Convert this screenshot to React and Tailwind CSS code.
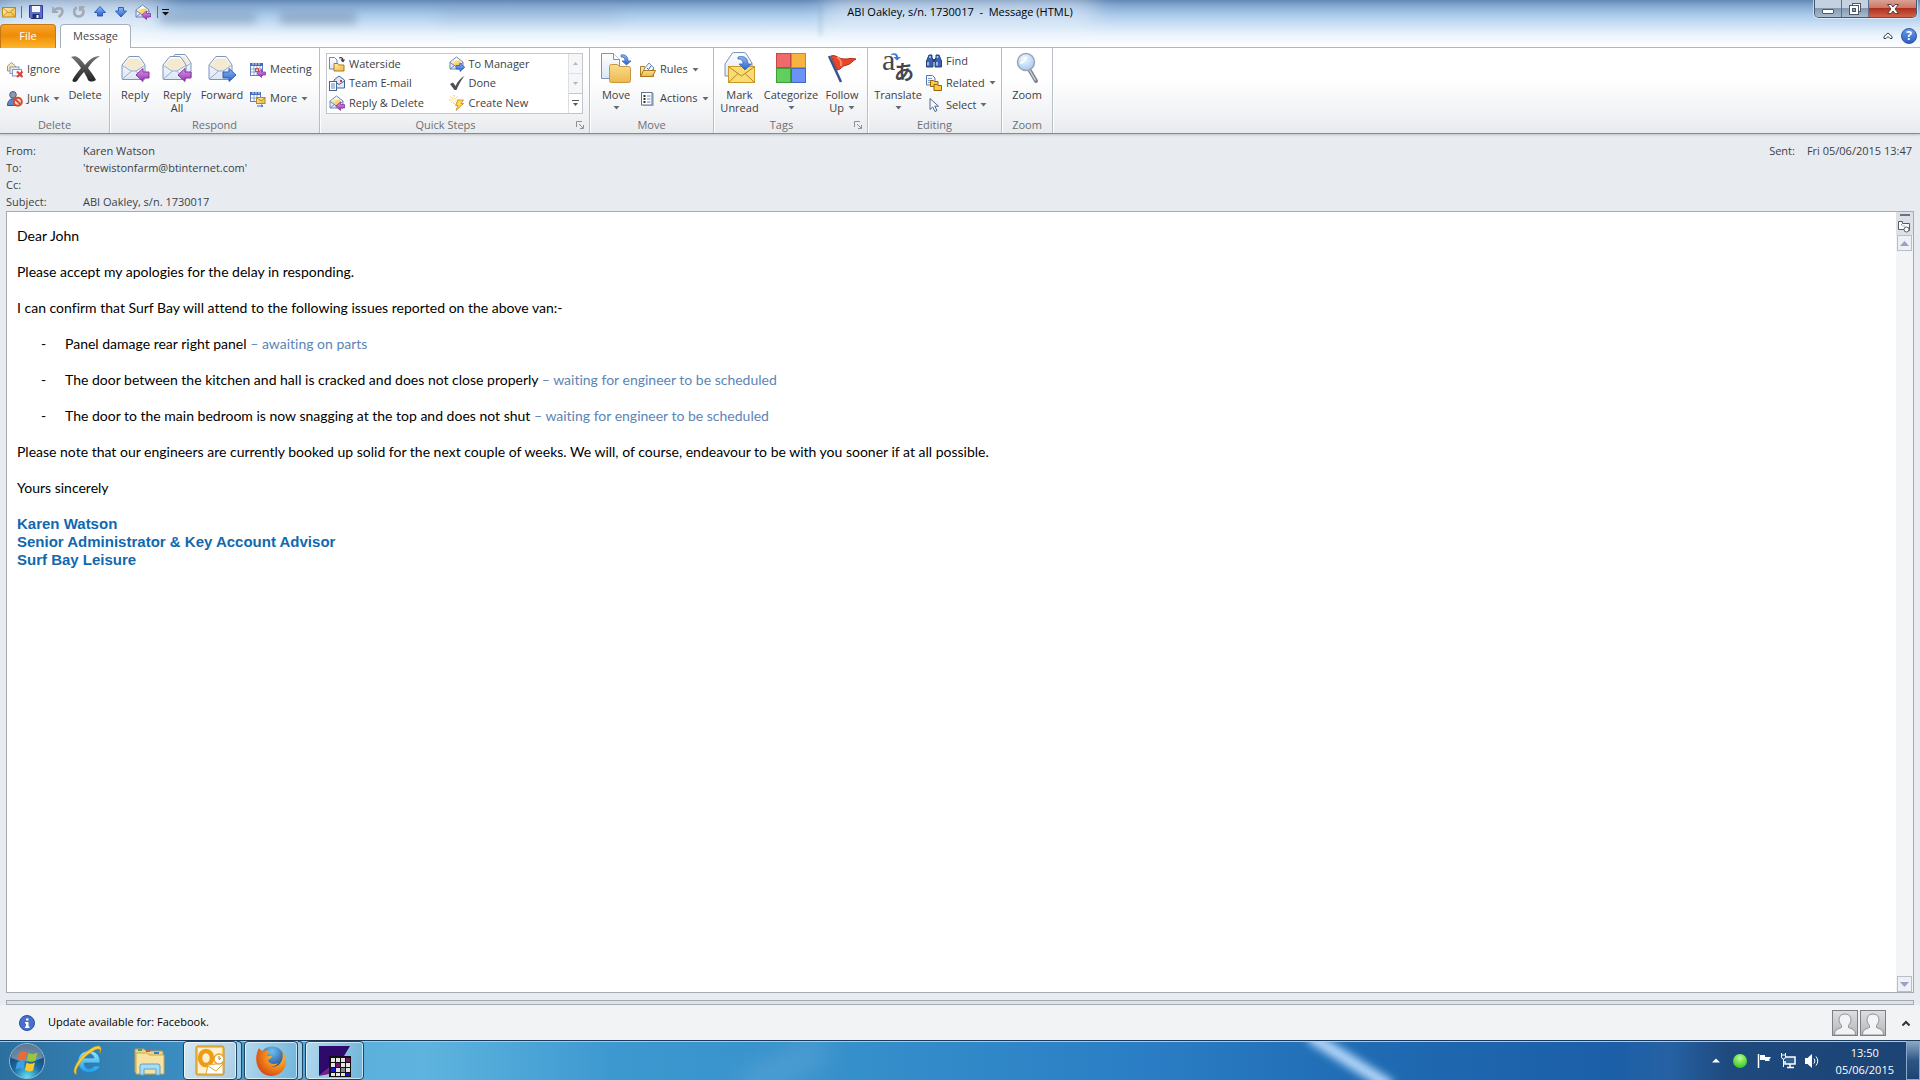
const Defs = () => (
    <svg className="absolute h-0 w-0" aria-hidden="true">
        <defs>
            <linearGradient id="gold" x1="0" y1="0" x2="1" y2="1">
                <stop offset="0" stopColor="#fff0b0" />
                <stop offset="1" stopColor="#eeb63c" />
            </linearGradient>
            <linearGradient id="folder" x1="0" y1="0" x2="0" y2="1">
                <stop offset="0" stopColor="#fbdc8f" />
                <stop offset="1" stopColor="#edb84e" />
            </linearGradient>
            <linearGradient id="paper" x1="0" y1="0" x2="0" y2="1">
                <stop offset="0" stopColor="#ffffff" />
                <stop offset="1" stopColor="#dce6f5" />
            </linearGradient>
            <linearGradient id="purple" x1="0" y1="0" x2="0" y2="1">
                <stop offset="0" stopColor="#d69be6" />
                <stop offset="1" stopColor="#9a35b5" />
            </linearGradient>
            <linearGradient id="blue" x1="0" y1="0" x2="0" y2="1">
                <stop offset="0" stopColor="#8db9f5" />
                <stop offset="1" stopColor="#2c62c8" />
            </linearGradient>
            <linearGradient id="dark" x1="0" y1="0" x2="0" y2="1">
                <stop offset="0" stopColor="#777" />
                <stop offset="1" stopColor="#222" />
            </linearGradient>
            <radialGradient id="orb" cx="0.5" cy="0.95" r="0.9">
                <stop offset="0" stopColor="#5fe0f5" />
                <stop offset="0.45" stopColor="#1c6ba3" />
                <stop offset="1" stopColor="#0e3358" />
            </radialGradient>
            <radialGradient id="lens" cx="0.4" cy="0.3" r="0.8">
                <stop offset="0" stopColor="#f4faff" />
                <stop offset="1" stopColor="#9cc5f2" />
            </radialGradient>
            <radialGradient id="fox" cx="0.7" cy="0.3" r="0.9">
                <stop offset="0" stopColor="#ffd43a" />
                <stop offset="0.5" stopColor="#f0801a" />
                <stop offset="1" stopColor="#c9330f" />
            </radialGradient>
            <radialGradient id="globe" cx="0.5" cy="0.2" r="0.8">
                <stop offset="0" stopColor="#6cc2f2" />
                <stop offset="1" stopColor="#17327c" />
            </radialGradient>
            <linearGradient id="ie" x1="0" y1="0" x2="0" y2="1">
                <stop offset="0" stopColor="#9be6ff" />
                <stop offset="1" stopColor="#1f9be4" />
            </linearGradient>
            <radialGradient id="green" cx="0.5" cy="0.3" r="0.7">
                <stop offset="0" stopColor="#b9ff8f" />
                <stop offset="1" stopColor="#35c41c" />
            </radialGradient>
        </defs>
    </svg>
);

const Svg = ({ size = 16, w, h, children }) => (
    <svg width={w || size} height={h || size} viewBox={`0 0 ${w || size} ${h || size}`} className="shrink-0" aria-hidden="true">
        {children}
    </svg>
);

const Caret = () => (
    <Svg w={7} h={4}>
        <path d="M0.5 0h6L3.5 3.6z" fill="#666b73" />
    </Svg>
);

/* small 16px icons */

const MailIcon = () => (
    <Svg size={14}>
        <rect x="0.5" y="2.5" width="13" height="9.5" fill="url(#gold)" stroke="#b98a1f" />
        <path d="M1 3l6 5 6-5M1 11.500l4.500-4.500M13 11.500L8.500 7" fill="none" stroke="#c69526" />
    </Svg>
);

const SaveIcon = () => (
    <Svg size={16}>
        <path d="M1.500 1.500h13v13h-11.500l-1.500-1.500z" fill="#5a6fd0" stroke="#2f3c8f" />
        <rect x="4" y="2" width="8" height="6" fill="#f4f7ff" />
        <rect x="4.500" y="10" width="7" height="5" fill="#23306f" />
        <rect x="8.500" y="11" width="2" height="3" fill="#fff" />
    </Svg>
);

const UndoIcon = () => (
    <Svg size={14}>
        <path d="M2 2v5h5" fill="none" stroke="#a3a9b2" strokeWidth="2" />
        <path d="M2.500 6.500C5 2 11.500 2 11.500 6.500c0 3-2 4-4 5.500" fill="none" stroke="#a3a9b2" strokeWidth="2.500" />
    </Svg>
);

const RedoIcon = () => (
    <Svg size={14}>
        <path d="M5 2.500C1 4 1 11 6.500 11.500 12 11.500 13 5 9 3" fill="none" stroke="#a3a9b2" strokeWidth="2.500" />
        <path d="M8 6V2h4.500" fill="none" stroke="#a3a9b2" strokeWidth="2" />
    </Svg>
);

const UpIcon = () => (
    <Svg size={14}>
        <path d="M7 1.500l5.500 6H9.500V11h-5V7.500H1.500z" fill="url(#blue)" stroke="#2d5fc4" />
    </Svg>
);

const DownIcon = () => (
    <Svg size={14}>
        <path d="M7 12l5.500-6H9.500V2.500h-5V6H1.500z" fill="url(#blue)" stroke="#2d5fc4" />
    </Svg>
);

const OpenMailSmall = ({ arrow }) => (
    <Svg size={16}>
        <path d="M1 6l6.500-5L14 6v7H1z" fill="url(#paper)" stroke="#6d87b5" />
        <path d="M3.500 4.500h8v3.500l-4 2.500-4-2.500z" fill="url(#gold)" />
        <path d="M1 6.500l6.500 4.500L14 6.500M1 13l4.500-3.500" fill="none" stroke="#6d87b5" />
        {arrow === "right" ? (
            <path d="M7 9.500h4V7l4.800 4.300L11 15.500V13H7z" fill="url(#blue)" stroke="#2b55ae" strokeWidth="0.700" />
        ) : (
            <path d="M15.500 9.500h-4V7L6.700 11.300l4.800 4.200V13h4z" fill="url(#purple)" stroke="#7d2a94" strokeWidth="0.700" />
        )}
    </Svg>
);

const IgnoreIcon = () => (
    <Svg size={16}>
        <path d="M0.500 4l4-3.500 4 3.500v5h-8z" fill="#fbe9b0" stroke="#8898b5" />
        <rect x="3" y="5" width="9" height="6.500" fill="#e8eef8" stroke="#8898b5" />
        <rect x="5.500" y="7.500" width="9" height="6.500" fill="#f5f8fd" stroke="#8898b5" />
        <path d="M10 9.500l5.500 5.500M15.500 9.500L10 15" stroke="#dd4037" strokeWidth="2" />
    </Svg>
);

const JunkIcon = () => (
    <Svg size={16}>
        <circle cx="6" cy="3.800" r="3.300" fill="#8b9bb5" stroke="#4b5a78" />
        <path d="M0.500 14.500c0-9 10.500-9 10.500 0z" fill="#5f86cc" stroke="#36548f" />
        <circle cx="10.800" cy="10.800" r="4" fill="#f7d9cf" stroke="#d94a2a" strokeWidth="2" />
        <path d="M8 8l5.600 5.600" stroke="#d94a2a" strokeWidth="2" />
    </Svg>
);

const MeetingIcon = ({ more }) => (
    <Svg size={16}>
        <rect x="0.500" y="1.500" width={more ? 10 : 12} height={more ? 9 : 12} fill="#fff" stroke="#5f7fc0" />
        <path d={more ? "M0 2.500h11" : "M0 2.500h13"} stroke="#4469bd" strokeWidth="3" />
        <path d="M3 0v3M6 0v3M9 0v3" stroke="#dfe8fa" />
        <path d={more ? "M1 7h9M4 4v6M7 4v6" : "M1 7h11M1 10h11M4 4v9M7 4v9M10 4v9"} stroke="#8aa4d6" />
        {more ? (
            <g>
                <rect x="6.500" y="6.500" width="8.500" height="6" fill="url(#gold)" stroke="#b18a2a" />
                <path d="M7 7l4 3 4-3" fill="none" stroke="#b18a2a" />
                <path d="M7 15h6M11 13.500l2 1.500-2 1" fill="none" stroke="#3c6bd0" />
            </g>
        ) : (
            <g>
                <rect x="5.500" y="6.500" width="3" height="3" fill="none" stroke="#e0483e" />
                <path d="M15.500 10h-4V7.500L7 11.500l4.500 4V13h4z" fill="url(#purple)" stroke="#7d2a94" strokeWidth="0.700" />
            </g>
        )}
    </Svg>
);

const MoveSmall = () => (
    <Svg size={16}>
        <path d="M0.500 1.500h5L8 4v9H0.500z" fill="url(#paper)" stroke="#6d87b5" />
        <path d="M10 2c3-1 4 0 4 3m-2-1.500l2 2 1.500-2" fill="none" stroke="#333b52" strokeWidth="1.200" />
        <path d="M5 7.500h4l1 1.500h5v6H5z" fill="url(#gold)" stroke="#a97b1c" />
    </Svg>
);

const TeamMail = () => (
    <Svg size={16}>
        <path d="M5 5l5-4 5.500 4v8H5z" fill="#dfe9f8" stroke="#4a648f" />
        <path d="M5 6l5 3.500L15.500 6" fill="none" stroke="#4a648f" />
        <rect x="11" y="5" width="2" height="2" fill="#d33" />
        <rect x="0.500" y="6.500" width="7" height="9" fill="#fff" stroke="#4a648f" />
        <path d="M2 9h4M2 11h4M2 13h4" stroke="#6787bb" />
    </Svg>
);

const DoneIcon = () => (
    <Svg size={16}>
        <path d="M1 9l3-1.500L6.500 11C9 6 11.500 3 15.500 1 12 5 9.500 10 7.500 15H5.500z" fill="#4c4f54" />
    </Svg>
);

const CreateNewIcon = () => (
    <Svg size={16}>
        <path d="M5 0v10M0 5h10M1.500 1.500l7 7M8.500 1.500l-7 7" stroke="#f0c441" strokeDasharray="1.500 1" />
        <circle cx="5" cy="5" r="2" fill="#fff7c9" />
        <path d="M9 5h5.500l-2.500 3.500h2.500L7 15.500l2-5H6.500z" fill="#ffd95a" stroke="#c48a12" strokeWidth="0.800" />
    </Svg>
);

const RulesIcon = () => (
    <Svg size={16}>
        <path d="M0.500 4.500h4l1 1.500h8v8.500H0.500z" fill="url(#gold)" stroke="#a97b1c" />
        <path d="M4 7l5-6 5 5-3 4H4z" fill="#f4f8ff" stroke="#7088b3" />
        <path d="M7 6l1.500 1.500L11 4" fill="none" stroke="#3a62b8" />
        <path d="M3.500 8.500h12l-3 6H0.500z" fill="url(#folder)" stroke="#a97b1c" />
    </Svg>
);

const ActionsIcon = () => (
    <Svg size={16}>
        <path d="M3 2h11v13H3z" fill="#b9c2d2" />
        <rect x="1.500" y="1.500" width="10.500" height="12.500" fill="#fff" stroke="#5f7395" />
        <rect x="3.500" y="4" width="2" height="2" fill="#333" />
        <rect x="3.500" y="7" width="2" height="2" fill="#333" />
        <rect x="3.500" y="10" width="2" height="2" fill="#333" />
        <path d="M7 5h3.500M7 8h3.500M7 11h3.500" stroke="#5f86cc" />
    </Svg>
);

const FindIcon = () => (
    <Svg size={16}>
        <path d="M3 2h3v3l1 1v8H0.500V8zM13 2h-3v3L9 6v8h6.500V8z" fill="#3c62ad" stroke="#23407c" />
        <path d="M7 6h2v3H7z" fill="#23407c" />
        <path d="M2 9v3.500M11 9v3.500M4 3v2M11.500 3v2" stroke="#bcd2f8" strokeWidth="1.500" />
    </Svg>
);

const RelatedIcon = () => (
    <Svg size={16}>
        <path d="M0.500 0.500h6L9 3v7H0.500z" fill="#f3f7ff" stroke="#5b78ad" />
        <path d="M2 3.500h4M2 5.500h5M2 7.500h3" stroke="#7b9bd2" />
        <path d="M4.500 5.500h3l1 1h3.500v5H4.500z" fill="#ffc83d" stroke="#93650d" />
        <path d="M8 9.500h3l1 1h3.500v5H8z" fill="#ffc83d" stroke="#93650d" />
    </Svg>
);

const SelectIcon = () => (
    <Svg size={16}>
        <path d="M4 1.500v11l2.700-2.500 2.300 4.500 2-1-2.200-4.300h3.700z" fill="#f5f8fd" stroke="#51658c" />
    </Svg>
);

/* large 32px icons */

const DeleteIcon = () => (
    <Svg size={32}>
        <path d="M2 5c5-2 8 0 14 8 4-5 8-9 15-9-5 3-9 7-12 12 3 4 6 8 8 12-3 2-6 2-8 0-1-3-3-6-4-8-3 3-5 6-7 9-2 2-6 1-4-2 2-4 5-7 8-11C9 12 6 8 2 5z" fill="url(#dark)" />
    </Svg>
);

const BigEnvelope = () => (
    <g>
        <path d="M3 13L9 5.500q1-1 2-1h8q1 0 2 1L26 13v13.500q0 1-1 1H4q-1 0-1-1z" fill="url(#paper)" stroke="#7c93bd" />
        <path d="M4.500 13L10 6.500h9.500L24.500 13 17 18h-5z" fill="#f3ead0" />
        <path d="M3.500 13.500L12 19h5l8.500-5.500M3.500 27l9-8M25.500 27l-9-8" fill="none" stroke="#9aabca" />
    </g>
);

const LeftArrow = () => <path d="M17 23l7-6.500V20h6v6h-6v3.500z" fill="url(#purple)" stroke="#88309f" />;

const ReplyIcon = () => (
    <Svg size={32}>
        <BigEnvelope />
        <LeftArrow />
    </Svg>
);

const ReplyAllIcon = () => (
    <Svg size={32}>
        <g transform="translate(4 -2)">
            <BigEnvelope />
        </g>
        <g transform="translate(-1 0)">
            <BigEnvelope />
        </g>
        <LeftArrow />
    </Svg>
);

const ForwardIcon = () => (
    <Svg size={32}>
        <BigEnvelope />
        <path d="M30 23l-7-6.500V20h-6v6h6v3.500z" fill="url(#blue)" stroke="#2b5fbd" />
    </Svg>
);

const MoveIcon = () => (
    <Svg size={32}>
        <path d="M1.500 1.500h12l6 6v19h-18z" fill="url(#paper)" stroke="#7c93bd" />
        <path d="M13.500 1.500v6h6" fill="#fff" stroke="#7c93bd" />
        <path d="M21 3c5-1 7 2 7 6h3l-4.500 4L22 9h3c0-3-1-4-4-4z" fill="url(#blue)" stroke="#2b5fbd" strokeWidth="0.700" />
        <path d="M9.500 14.500q0-2 2-2h6l2 2h9q2 0 2 2v12q0 2-2 2h-17q-2 0-2-2z" fill="url(#folder)" stroke="#c9953a" />
    </Svg>
);

const MarkUnreadIcon = () => (
    <Svg size={32}>
        <path d="M1 12L7 3q1-2.500 3-2.500h10q2 0 3 2.500l5 8v13H1z" fill="url(#paper)" stroke="#7c93bd" />
        <rect x="4.500" y="14.500" width="26" height="16" fill="#fbdc74" stroke="#c99a2a" />
        <path d="M5 15l12.500 9L30 15M5 30l9-8.500M30 30l-9-8.500" fill="none" stroke="#b8861f" />
        <path d="M14 5c7-2 10 2 10 7h3.500l-6.500 6-6-6h4c0-3-1-5-5-5z" fill="url(#blue)" stroke="#2b5fbd" strokeWidth="0.700" />
    </Svg>
);

const CategorizeIcon = () => (
    <Svg size={32}>
        <rect x="1.500" y="1.500" width="14" height="14" fill="#f0696b" stroke="#c64747" />
        <rect x="16.500" y="1.500" width="14" height="14" fill="#f7b340" stroke="#cf8a20" />
        <rect x="1.500" y="16.500" width="14" height="14" fill="#62cf5c" stroke="#3d9e3b" />
        <rect x="16.500" y="16.500" width="14" height="14" fill="#6b93f5" stroke="#4467c4" />
    </Svg>
);

const FollowUpIcon = () => (
    <Svg size={32}>
        <path d="M5 4c5-2 7 3 13 3 5 0 7-1 12 0-4 2-5 5-9 6-5 0-6 5-10 5z" fill="#e8472a" stroke="#b22c14" />
        <path d="M11 5c3 2 5 5 4 9" stroke="#f58a6b" strokeWidth="2" fill="none" />
        <path d="M3 4l12 26" stroke="#3a538f" strokeWidth="2.500" />
    </Svg>
);

const TranslateIcon = () => (
    <div className="relative h-8 w-8 shrink-0 text-[#44474c]" aria-hidden="true">
        <span className="absolute -top-1 left-0 font-['Liberation_Serif',serif] text-3xl leading-6">a</span>
        <span className="absolute top-2 left-3 font-['Noto_Sans_CJK_JP',sans-serif] text-xl leading-6 font-bold">あ</span>
        <span className="absolute top-0 left-2">
            <Svg w={12} h={9}>
                <path d="M1 2c4-2 7 0 7 3h3L7 8.500 3.500 5H6C6 3 4 2.500 1 3z" fill="#3f76d8" />
            </Svg>
        </span>
    </div>
);

const ZoomIcon = () => (
    <Svg size={32}>
        <path d="M18 17l7 12" stroke="#7d828c" strokeWidth="4" strokeLinecap="round" />
        <path d="M18.500 18l6 10.500" stroke="#cdd1d8" strokeWidth="1.500" />
        <circle cx="15" cy="10" r="8.500" fill="url(#lens)" stroke="#9aa5b8" strokeWidth="1.500" />
        <path d="M9 11c3 0 5-2 6-6" fill="none" stroke="#fff" strokeWidth="1.500" />
    </Svg>
);

const SmallButton = ({ icon, label, menu }) => (
    <button className="flex items-center gap-1 whitespace-nowrap text-left">
        {icon}
        <span>{label}</span>
        {menu && <Caret />}
    </button>
);

const BigButton = ({ icon, label, label2, menu, className }) => (
    <button className={`flex flex-col items-center whitespace-nowrap pt-1 leading-[13px] ${className}`}>
        {icon}
        <span className="mt-1">{label}</span>
        <span className="flex h-[13px] items-center gap-1">
            {label2}
            {menu && <Caret />}
        </span>
    </button>
);

const Group = ({ title, launcher, className, children }) => (
    <section className={`flex h-[85px] shrink-0 flex-col border-r border-[#b9bdc4] shadow-[1px_0_0_#fff] ${className}`}>
        <div className="flex flex-1">{children}</div>
        <div className="flex h-4 items-center justify-center text-[#6b7077]">
            <h2 className="flex-1 text-center">{title}</h2>
            {launcher && (
                <button className="flex w-[18px] justify-center" aria-label={`${title} options`}>
                    <Svg size={8}>
                        <path d="M0.500 6V0.500H6M3 3l4 4M7.500 4v3.500H4" fill="none" stroke="#8b9098" />
                    </Svg>
                </button>
            )}
        </div>
    </section>
);

const quickAccess = [
    { label: "Save", icon: <SaveIcon /> },
    { label: "Undo", icon: <UndoIcon /> },
    { label: "Redo", icon: <RedoIcon /> },
    { label: "Previous item", icon: <UpIcon /> },
    { label: "Next item", icon: <DownIcon /> },
    { label: "Reply and delete", icon: <OpenMailSmall /> },
];

const quickSteps = [
    { label: "Waterside", icon: <MoveSmall /> },
    { label: "To Manager", icon: <OpenMailSmall arrow="right" /> },
    { label: "Team E-mail", icon: <TeamMail /> },
    { label: "Done", icon: <DoneIcon /> },
    { label: "Reply & Delete", icon: <OpenMailSmall /> },
    { label: "Create New", icon: <CreateNewIcon /> },
];

const headers = [
    { label: "From:", value: "Karen Watson" },
    { label: "To:", value: "'trewistonfarm@btinternet.com'" },
    { label: "Cc:", value: "" },
    { label: "Subject:", value: "ABI Oakley, s/n. 1730017" },
];

const issues = [
    { text: "Panel damage rear right panel", status: "awaiting on parts" },
    { text: "The door between the kitchen and hall is cracked and does not close properly", status: "waiting for engineer to be scheduled" },
    { text: "The door to the main bedroom is now snagging at the top and does not shut", status: "waiting for engineer to be scheduled" },
];

const TitleBar = () => (
    <header className="relative h-12 overflow-hidden bg-[linear-gradient(#6388b3_0,#84a9d2_12%,#a9c8ea_30%,#c9dff4_50%,#eaf3fc_72%,#fff_100%)]">
        {/* another window showing through the glass */}
        <div className="absolute -top-3 left-0 h-12 w-40 bg-white/50 blur-lg" />
        <div className="absolute top-3 left-40 h-3 w-24 bg-[#5d7694]/35 blur-xs" />
        <div className="absolute top-3 left-70 h-3 w-19 bg-[#5d7694]/40 blur-xs" />
        <div className="absolute top-3 left-110 h-2 w-45 bg-[#5d7694]/20 blur-sm" />
        <div className="absolute top-1 left-205 h-8 w-px bg-[#4f6f96]/60 blur-[2px]" />
        <div className="absolute -top-1 left-[43%] h-7 w-[14%] bg-white/50 blur-md" />
        <div className="relative grid h-6 grid-cols-[1fr_auto_1fr]">
            <div className="flex items-center pl-0.5">
                <MailIcon />
                <span className="mr-1 ml-[5px] h-3 w-px bg-[#5d7188]" />
                <div className="flex items-center gap-[7px] pl-0.5">
                    {quickAccess.map((item) => (
                        <button key={item.label} aria-label={item.label}>
                            {item.icon}
                        </button>
                    ))}
                </div>
                <span className="mr-1 ml-1.5 h-3 w-px bg-[#5d7188]" />
                <button aria-label="Customize toolbar">
                    <Svg w={7} h={7}>
                        <path d="M0 0.500h7" stroke="#111" />
                        <path d="M0 3h7L3.500 6.500z" fill="#111" />
                    </Svg>
                </button>
            </div>
            <h1 className="whitespace-pre leading-6 text-black">ABI Oakley, s/n. 1730017  -  Message (HTML)</h1>
            <div className="flex items-start justify-end pr-[3px]">
                <div className="flex h-[18px] overflow-hidden rounded-b-[5px] border border-t-0 border-[#44586e] shadow-[0_0_0_1px_#ffffff88]">
                    <button className="flex w-[27px] items-center justify-center border-r border-[#5b6f87] bg-[linear-gradient(#c5d1df_45%,#8499b2_50%,#a9bccf)]" aria-label="Minimize">
                        <Svg w={12} h={10}>
                            <rect x="0.500" y="5.500" width="11" height="4" rx="0.500" fill="#fff" stroke="#4c5867" />
                        </Svg>
                    </button>
                    <button className="flex w-[27px] items-center justify-center border-r border-[#5b6f87] bg-[linear-gradient(#c5d1df_45%,#8499b2_50%,#a9bccf)]" aria-label="Restore">
                        <Svg size={12}>
                            <rect x="3.500" y="0.500" width="8" height="8" fill="#fff" stroke="#4c5867" />
                            <rect x="0.500" y="2.500" width="9" height="9" fill="#fff" stroke="#4c5867" />
                            <rect x="3.500" y="5.500" width="3" height="3" fill="#8fa0b5" stroke="#4c5867" />
                        </Svg>
                    </button>
                    <button className="flex w-[47px] items-center justify-center bg-[linear-gradient(#dba095_0,#cc7868_45%,#b02f1c_50%,#d0644c)]" aria-label="Close">
                        <Svg w={12} h={10}>
                            <path d="M0.500 0.500h3.500L6 3l2-2.500h3.500L8 5l3.500 4.500H8L6 7 4 9.500H0.500L4 5z" fill="#fff" stroke="#59403c" />
                        </Svg>
                    </button>
                </div>
            </div>
        </div>
        <div className="relative flex h-6 items-end">
            <button className="h-6 w-14 rounded-t-sm border border-b-0 border-[#c8780e] bg-[linear-gradient(#f7a52c,#ef8c07_45%,#fdb62a)] text-white">File</button>
            <button className="ml-1 h-6 w-[71px] rounded-t-sm border border-b-0 border-[#a9afb8] bg-white text-[#44484e]">Message</button>
            <div className="flex flex-1 items-center justify-end gap-2 self-stretch border-b border-[#b0b5bc] pr-[3px]">
                <button aria-label="Collapse ribbon">
                    <Svg w={10} h={8}>
                        <path d="M1 6.500V4.500L5 1l4 3.500v2H7L5 4.500 3 6.500z" fill="#fff" stroke="#333b45" />
                    </Svg>
                </button>
                <button className="flex h-4 w-4 items-center justify-center rounded-full border border-[#2d53a0] bg-[linear-gradient(#6d97e8,#2f5fc4)] text-xs leading-3 font-bold text-white">?</button>
            </div>
        </div>
    </header>
);

const Ribbon = () => (
    <nav className="flex border-b border-[#868b92] bg-[linear-gradient(#fff_0,#fff_35%,#f4f5f7_70%,#e8ebee_100%)] text-[#3b3f45] shadow-[0_1px_2px_#00000030]">
        <Group title="Delete" className="w-[110px]">
            <div className="flex w-[63px] shrink-0 flex-col pt-[7px] pl-[7px] *:h-[29px]">
                <SmallButton icon={<IgnoreIcon />} label="Ignore" />
                <SmallButton icon={<JunkIcon />} label="Junk" menu />
            </div>
            <BigButton className="w-11" icon={<DeleteIcon />} label="Delete" />
        </Group>
        <Group title="Respond" className="w-[210px]">
            <BigButton className="ml-1 w-[42px]" icon={<ReplyIcon />} label="Reply" />
            <BigButton className="w-[42px]" icon={<ReplyAllIcon />} label="Reply" label2="All" />
            <BigButton className="w-12" icon={<ForwardIcon />} label="Forward" />
            <div className="flex flex-col pt-[7px] pl-1 *:h-[29px]">
                <SmallButton icon={<MeetingIcon />} label="Meeting" />
                <SmallButton icon={<MeetingIcon more />} label="More" menu />
            </div>
        </Group>
        <Group title="Quick Steps" launcher className="w-[270px]">
            <div className="mt-[5px] ml-1.5 flex h-[61px] w-[257px] border border-[#c3c7cd] bg-white">
                <div className="grid flex-1 grid-cols-2 pl-0.5">
                    {quickSteps.map((step) => (
                        <SmallButton key={step.label} icon={step.icon} label={step.label} />
                    ))}
                </div>
                <div className="flex w-3.5 flex-col border-l border-[#dcdfe3] *:flex *:flex-1 *:items-center *:justify-center">
                    <button className="bg-[#f5f6f7]" aria-label="Scroll up">
                        <Svg w={5} h={3}>
                            <path d="M0 3h5L2.500 0z" fill="#b4b8be" />
                        </Svg>
                    </button>
                    <button className="border-t border-[#dcdfe3] bg-[#f5f6f7]" aria-label="Scroll down">
                        <Svg w={5} h={3}>
                            <path d="M0 0h5L2.500 3z" fill="#b4b8be" />
                        </Svg>
                    </button>
                    <button className="border-t border-[#c3c7cd]" aria-label="All quick steps">
                        <Svg w={7} h={7}>
                            <path d="M0 0.500h7" stroke="#555" />
                            <path d="M1 3h5L3.500 6z" fill="#555" />
                        </Svg>
                    </button>
                </div>
            </div>
        </Group>
        <Group title="Move" className="w-[124px]">
            <BigButton className="ml-1 w-11" icon={<MoveIcon />} label="Move" menu />
            <div className="flex flex-col pt-[7px] pl-0.5 *:h-[29px]">
                <SmallButton icon={<RulesIcon />} label="Rules" menu />
                <SmallButton icon={<ActionsIcon />} label="Actions" menu />
            </div>
        </Group>
        <Group title="Tags" launcher className="w-[154px]">
            <BigButton className="ml-0.5 w-[47px]" icon={<MarkUnreadIcon />} label="Mark" label2="Unread" />
            <BigButton className="w-14" icon={<CategorizeIcon />} label="Categorize" menu />
            <BigButton className="w-[46px]" icon={<FollowUpIcon />} label="Follow" label2="Up" menu />
        </Group>
        <Group title="Editing" className="w-[134px]">
            <BigButton className="ml-1 w-[52px]" icon={<TranslateIcon />} label="Translate" menu />
            <div className="flex flex-col pt-0.5 pl-0.5 *:h-[22px]">
                <SmallButton icon={<FindIcon />} label="Find" />
                <SmallButton icon={<RelatedIcon />} label="Related" menu />
                <SmallButton icon={<SelectIcon />} label="Select" menu />
            </div>
        </Group>
        <Group title="Zoom" className="w-[51px]">
            <BigButton className="w-full" icon={<ZoomIcon />} label="Zoom" />
        </Group>
    </nav>
);

const MessageBody = () => (
    <main className="mx-1.5 flex flex-1 border border-[#a5abb5] bg-white">
        <article className="flex flex-1 flex-col gap-[18px] pt-[15px] pl-2.5 font-['Lato',sans-serif] text-[14px] leading-[18px] text-black [font-variant-ligatures:none]">
            <p>Dear John</p>
            <p>Please accept my apologies for the delay in responding.</p>
            <p>I can confirm that Surf Bay will attend to the following issues reported on the above van:-</p>
            <ul className="flex flex-col gap-[18px] pl-6">
                {issues.map((issue) => (
                    <li key={issue.text} className="flex">
                        <span className="w-6">-</span>
                        <p>
                            {issue.text} <span className="text-[#5b84b8]">– {issue.status}</span>
                        </p>
                    </li>
                ))}
            </ul>
            <p>Please note that our engineers are currently booked up solid for the next couple of weeks. We will, of course, endeavour to be with you sooner if at all possible.</p>
            <p>Yours sincerely</p>
            <address className="font-['Liberation_Sans',sans-serif] text-[15px] font-bold text-[#1069b0] not-italic">
                Karen Watson
                <br />
                Senior Administrator &amp; Key Account Advisor
                <br />
                Surf Bay Leisure
            </address>
        </article>
        <div className="flex w-[17px] flex-col items-center bg-[#f3f4f6]">
            <div className="flex h-[23px] w-full flex-col items-center gap-1 bg-[#dde1e7] pt-0.5">
                <span className="h-0.5 w-2.5 shrink-0 bg-[#6a7180]" />
                <button aria-label="Select browse object">
                    <Svg size={13}>
                        <path d="M0.500 1.500h4v2h7v7h-4v-1h-7z" fill="#fff" stroke="#555c68" />
                        <path d="M3 4l2.500 3M6 5.500l3 4 2.500-3" fill="none" stroke="#555c68" strokeDasharray="1 1" />
                        <circle cx="8.500" cy="9.500" r="2.500" fill="#fff" stroke="#555c68" />
                    </Svg>
                </button>
            </div>
            <button className="flex h-4 w-[15px] items-center justify-center border border-[#b9bdc9] bg-[#eef0f6]" aria-label="Scroll up">
                <Svg w={9} h={5}>
                    <path d="M0 5h9L4.500 0z" fill="#99a1c4" />
                </Svg>
            </button>
            <div className="flex-1" />
            <button className="flex h-4 w-[15px] items-center justify-center border border-[#b9bdc9] bg-[#eef0f6]" aria-label="Scroll down">
                <Svg w={9} h={5}>
                    <path d="M0 0h9L4.500 5z" fill="#99a1c4" />
                </Svg>
            </button>
        </div>
    </main>
);

const Person = () => (
    <button className="border border-[#7c7f84] bg-[linear-gradient(#dcdee0,#b4b7bb)]" aria-label="Contact">
        <Svg size={24}>
            <path d="M1.500 24c0-6 4-6 7-7.500v-2C4 9 6 3 12 3s8 6 3.500 11.500v2c3 1.500 7 1.500 7 7.500z" fill="#f2f3f4" stroke="#8d9095" />
        </Svg>
    </button>
);

const PeoplePane = () => (
    <aside className="bg-[#f1f3f5]">
        <div className="bg-[#e8ecf1] pt-[7px]">
            <div className="mx-1.5 h-[5px] border border-[#a5abb5] bg-[#dfe3e9]" />
        </div>
        <div className="flex h-[35px] items-center pr-[10px] pl-[19px] text-black">
            <Svg size={16}>
                <circle cx="8" cy="8" r="7.500" fill="#4770cc" stroke="#2d4f9f" />
                <path d="M7 3.500h2.500v2H7zM6 7h3.500v4.500h1V13H6v-1.500h1v-3H6z" fill="#fff" />
            </Svg>
            <p className="ml-[13px] flex-1">Update available for: Facebook.</p>
            <div className="mr-4 flex gap-0.5">
                <Person />
                <Person />
            </div>
            <button aria-label="Expand people pane">
                <Svg w={8} h={6}>
                    <path d="M0.500 5.500L4 2l3.500 3.500" fill="none" stroke="#333" strokeWidth="2" />
                </Svg>
            </button>
        </div>
    </aside>
);

const TaskButton = ({ label, stacked, active, children }) => (
    <button className="flex h-[39px]" aria-label={label}>
        <span
            className={`flex h-full items-center justify-center rounded-sm border border-[#1d4460] shadow-[inset_0_0_0_1px_#ffffffa0] ${
                stacked ? "w-[54px]" : "w-[59px]"
            } ${active ? "bg-[linear-gradient(120deg,#d5e8f3,#a9cde3)]" : "bg-[linear-gradient(100deg,#b2d8ee,#6fb5db)]"}`}
        >
            {children}
        </span>
        {stacked && <span className="h-full w-[5px] rounded-r-sm border border-l-0 border-[#1d4460] bg-[#9ccbe6]" />}
    </button>
);

const Taskbar = () => (
    <footer className="relative flex h-10 items-center overflow-hidden border-t border-[#1c3b5c] bg-[linear-gradient(90deg,#2b6f9f_0,#3a8cc0_9%,#5cb0dc_19%,#5eb4de_22%,#3d98d0_32%,#358fca_45%,#2a7dc4_60%,#1f6ab2_72%,#1b5fa8_84%,#2661a3_87%,#1e4a7e_90%,#1c4373_100%)] text-white shadow-[inset_0_1px_0_#a5cbe6]">
        <div className="absolute -top-7 left-[70%] h-24 w-3 rotate-[-58deg] bg-[#b8dafc] blur-[4px]" />
        <div className="absolute -top-5 left-[40%] h-24 w-8 rotate-[60deg] bg-white/10 blur-md" />
        <div className="relative flex flex-1 items-center">
            <button className="ml-2" aria-label="Start">
                <Svg size={38}>
                    <circle cx="19" cy="19" r="17.500" fill="url(#orb)" stroke="#8fb8d8" />
                    <path d="M3 16a16 14 0 0 1 32 0q-16 7-32 0z" fill="#fff" opacity="0.350" />
                    <path d="M11 11q4-3 8-0.500l-1.500 7.500q-4-2-8 0.500z" fill="#ee6a35" />
                    <path d="M20.500 11q4 2.500 9-0.500l-2 8q-4 2.500-8.500 0z" fill="#9ac83c" />
                    <path d="M9 20.500q4-2.500 8-0.500l-1.500 7.500q-4-2.500-8 0z" fill="#3fa0e6" />
                    <path d="M18.500 20.500q4 2.500 8.500 0l-2 8q-4 2-8-0.500z" fill="#fbc92e" />
                </Svg>
            </button>
            <button className="ml-[26px]" aria-label="Internet Explorer">
                <Svg w={32} h={34}>
                    <path d="M28 19H12c0 7 8 7 10 3h6C24 32 6 31 6 17 7 3 29 3 28 19zM12 14h10c-1-6-9-6-10 0z" fill="url(#ie)" stroke="#1b7fc4" strokeWidth="0.700" />
                    <path d="M5 30C-3 31 6 12 20 4c7-4 11-2 8 5 1-5-2-5-7-2C10 13 1 28 5 30z" fill="#f9cf3a" stroke="#c8951b" strokeWidth="0.600" />
                </Svg>
            </button>
            <button className="ml-[29px]" aria-label="Windows Explorer">
                <Svg size={34}>
                    <path d="M2 5h9l2 2h16q1 0 1 1v20H2z" fill="#ecd58a" stroke="#b9984a" />
                    <path d="M5 5h4v2H5z" fill="#4aa54a" />
                    <path d="M13 6h4v2h-4z" fill="#d9533a" />
                    <path d="M21 8h5v2h-5z" fill="#3a79d9" />
                    <path d="M3 9h11l2 2h15v19H3z" fill="#f6e3a0" stroke="#c9a550" />
                    <path d="M7 31V22q0-2 2-2h16q2 0 2 2v9h-4v-6H11v6z" fill="#a8dcf5" stroke="#5aa0cd" />
                </Svg>
            </button>
            <div className="ml-4 flex gap-0.5">
                <TaskButton label="Outlook" stacked active>
                    <Svg size={32}>
                        <rect x="2" y="1" width="28" height="29" rx="2" fill="#f7c54e" stroke="#c88a1a" />
                        <rect x="4" y="3" width="24" height="25" fill="#fdf1cf" />
                        <ellipse cx="12" cy="13" rx="6" ry="7" fill="none" stroke="#ee9b16" strokeWidth="4.500" />
                        <path d="M14 20l15-2v11H12z" fill="#fff" stroke="#dca844" />
                        <path d="M14 21l8 5 7-7" fill="none" stroke="#dca844" />
                        <circle cx="25" cy="14" r="5" fill="#fff" stroke="#eaa12c" strokeWidth="1.500" />
                        <path d="M25 11v3.500l2-1.500" fill="none" stroke="#bb7a12" />
                    </Svg>
                </TaskButton>
                <TaskButton label="Firefox" stacked>
                    <Svg size={32}>
                        <circle cx="17" cy="14" r="12.500" fill="url(#globe)" />
                        <path d="M4 3c1 2 3 3 5 3 3-1 5 0 6 1-2 1-3 2-3 4h5c-1 3-3 3-4 4 1 4 6 5 10 3-2 3-5 4-8 4 9 1 15-6 12-17 9 12 2 26-11 26C4 31-3 16 4 3z" fill="url(#fox)" />
                    </Svg>
                </TaskButton>
                <TaskButton label="Scheduler">
                    <Svg size={32}>
                        <path d="M0 1h31l-6 10-25 20z" fill="#2e0a6b" />
                        <path d="M0 31l10-8v6z" fill="#7a1a8a" />
                        <rect x="10" y="11" width="22" height="21" fill="#111" />
                        <path d="M12 13h4v4h-4zM17 13h4v4h-4zM22 13h4v4h-4zM12 18h4v4h-4zM22 18h4v4h-4zM27 18h4v4h-4zM17 23h4v4h-4zM27 23h4v4h-4zM12 28h4v3h-4zM17 28h4v3h-4zM22 28h4v3h-4z" fill="#e6e6e6" />
                        <path d="M27 13h4v4h-4zM17 18h4v4h-4z" fill="#7a107a" />
                        <path d="M12 23h4v4h-4zM27 28h4v3h-4z" fill="#1414d8" />
                        <path d="M22 23h4v4h-4z" fill="#888" />
                    </Svg>
                </TaskButton>
            </div>
        </div>
        <div className="relative flex items-center">
            <button aria-label="Show hidden icons">
                <Svg w={8} h={5}>
                    <path d="M0 4.500h8L4 0.500z" fill="#fff" />
                </Svg>
            </button>
            <span className="ml-3">
                <Svg size={16}>
                    <circle cx="8" cy="8" r="7" fill="url(#green)" />
                </Svg>
            </span>
            <span className="ml-2">
                <Svg size={16}>
                    <path d="M2.500 1v14" stroke="#fff" strokeWidth="1.500" />
                    <path d="M4 2h5v2h6l-2 3 1 1H9V7H4z" fill="#fff" />
                </Svg>
            </span>
            <span className="ml-2">
                <Svg size={16}>
                    <path d="M6 4h9v7H5V8" fill="#35608f" stroke="#fff" strokeWidth="1.500" />
                    <path d="M7 14.500h7M10 11v3" stroke="#fff" strokeWidth="1.500" />
                    <path d="M1 2h5M1.500 0v4q0 2 2 2t2-2V0M3.500 6v8" fill="none" stroke="#fff" />
                </Svg>
            </span>
            <span className="ml-2">
                <Svg size={16}>
                    <path d="M1 5h2.500L8 1v14l-4.500-4H1z" fill="#fff" />
                    <path d="M10 5.500q2 2.500 0 5M12 3.500q3.500 4.500 0 9" fill="none" stroke="#fff" />
                </Svg>
            </span>
            <time className="mr-3 ml-4 text-center leading-[17px]">
                13:50
                <br />
                05/06/2015
            </time>
            <button className="h-[39px] w-3.5 border border-[#8ba9c9] bg-[linear-gradient(#8aa5c4,#2d5687_50%,#1c4373)]" aria-label="Show desktop" />
        </div>
    </footer>
);

const App = () => {
    return (
        <div className="flex min-h-screen flex-col bg-[#e8ecf1] font-['Open_Sans',sans-serif] text-[11px]">
            <Defs />
            <TitleBar />
            <Ribbon />
            <div className="flex justify-between pt-2 pr-2 pb-px pl-1.5 leading-[17px] text-[#3b3f45]">
                <dl>
                    {headers.map((row) => (
                        <div key={row.label} className="flex">
                            <dt className="w-[77px]">{row.label}</dt>
                            <dd>{row.value}</dd>
                        </div>
                    ))}
                </dl>
                <dl className="flex gap-3">
                    <dt>Sent:</dt>
                    <dd>Fri 05/06/2015 13:47</dd>
                </dl>
            </div>
            <MessageBody />
            <PeoplePane />
            <Taskbar />
        </div>
    );
};

export default App;
